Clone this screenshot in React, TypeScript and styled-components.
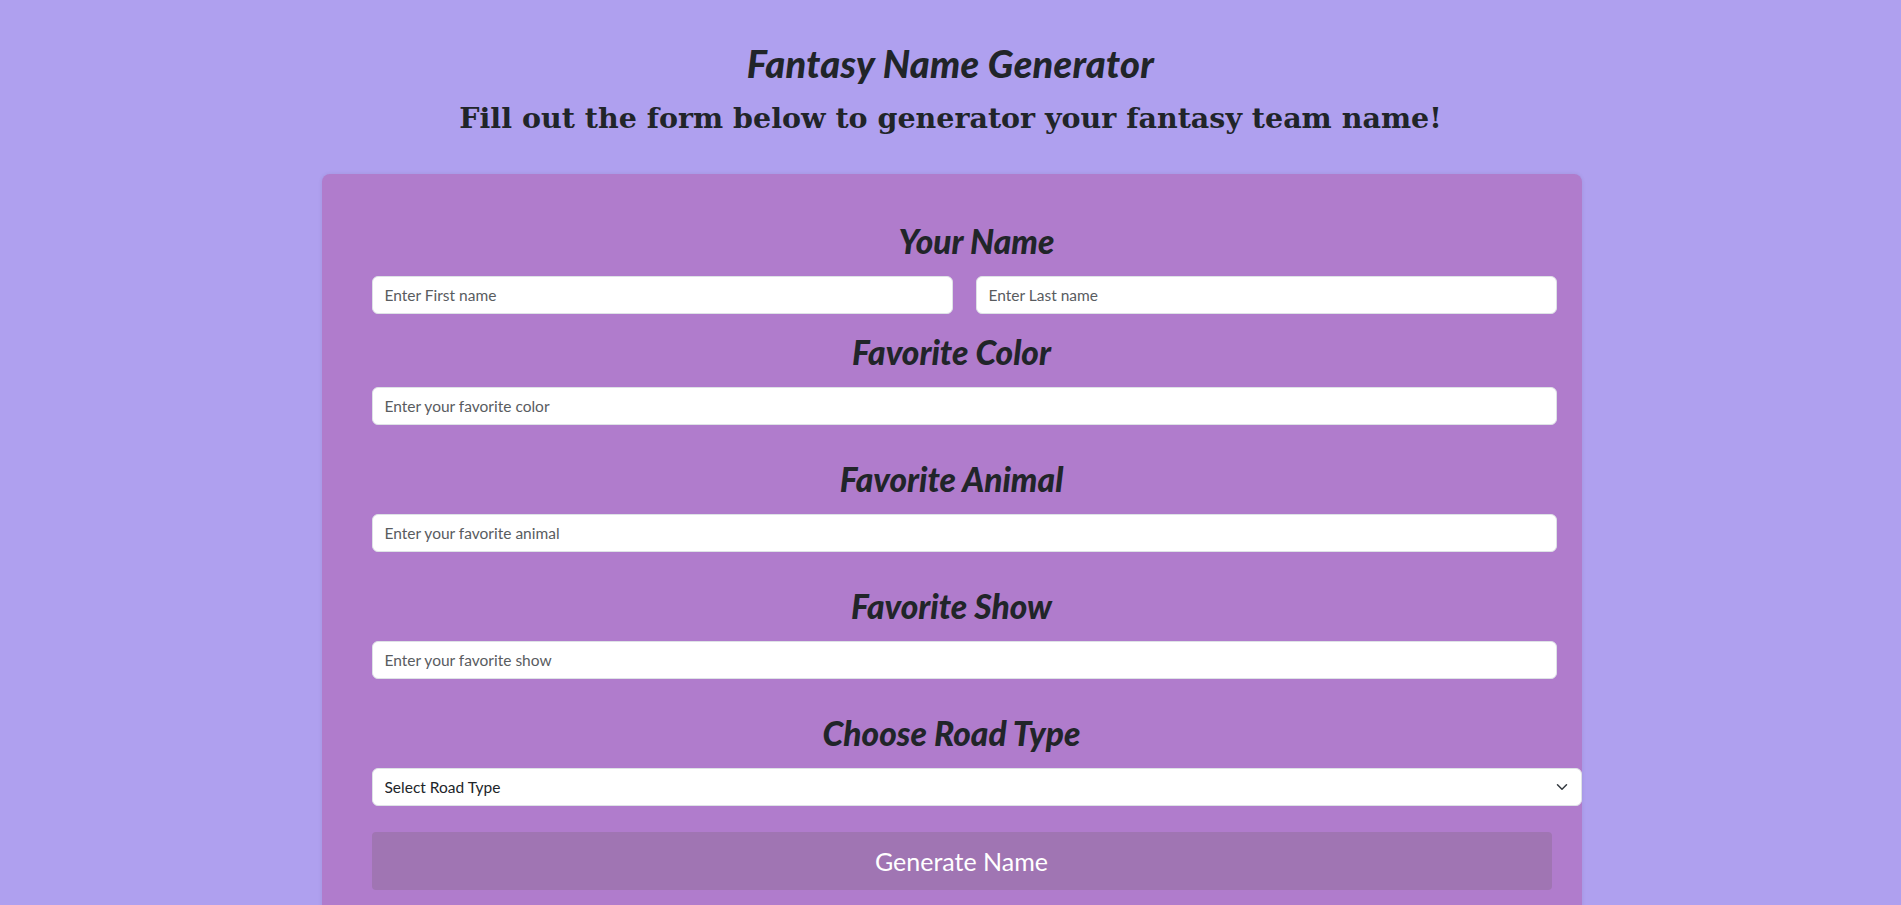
import React from "react";
import styled, { createGlobalStyle } from "styled-components";

const GlobalStyle = createGlobalStyle`
  html, body {
    margin: 0;
    padding: 0;
    background: #afa0ef;
    font-family: Lato, "Open Sans", sans-serif;
    color: #212529;
  }
  * { box-sizing: border-box; }
`;

const Page = styled.div`
  padding-top: 42px;
  min-height: 905px;
`;

const Title = styled.h1`
  margin: 0;
  text-align: center;
  font-family: Lato, sans-serif;
  font-style: italic;
  font-weight: 900;
  font-size: 38px;
  letter-spacing: 0.3px;
  line-height: 42px;
`;

const Subtitle = styled.h2`
  margin: 14px 0 0;
  text-align: center;
  font-family: "DejaVu Serif", serif;
  font-weight: 700;
  font-size: 28.5px;
  line-height: 40px;
`;

const Card = styled.form`
  width: 1260px;
  margin: 36px 0 0 calc(50% - 629px);
  padding: 49px 0 40px 50px;
  background: #b07ccc;
  border-radius: 8px;
  box-shadow: 0 0 4px rgba(0, 0, 0, 0.08);
`;

const Heading = styled.h3<{ $wide?: boolean }>`
  margin: 0 0 17px ${(p) => (p.$wide ? "-50px" : "0")};
  text-align: center;
  font-family: Lato, sans-serif;
  font-style: italic;
  font-weight: 900;
  font-size: 33.5px;
  line-height: 36px;
`;

const NameRow = styled.div`
  display: grid;
  grid-template-columns: 1fr 1fr;
  column-gap: 23px;
  width: calc(100% - 25px);
  margin-bottom: 20px;
`;

const Input = styled.input<{ $last?: boolean }>`
  display: block;
  width: ${(p) => (p.$last ? "100%" : "calc(100% - 25px)")};
  height: 38px;
  margin: 0 0 ${(p) => (p.$last ? "0" : "36px")};
  padding: 6px 12px;
  border: 1px solid #dee2e6;
  border-radius: 6px;
  background: #fff;
  font-family: Lato, sans-serif;
  font-size: 15.5px;
  color: #212529;
  outline: none;
  &::placeholder {
    color: #595c5f;
  }
`;

const SelectWrap = styled.div`
  position: relative;
  width: 100%;
  margin-bottom: 26px;
`;

const Select = styled.select`
  display: block;
  width: 100%;
  height: 38px;
  padding: 6px 36px 6px 12px;
  border: 1px solid #dee2e6;
  border-radius: 6px;
  background: #fff;
  font-family: Lato, sans-serif;
  font-size: 15.5px;
  color: #212529;
  appearance: none;
  outline: none;
`;

const Chevron = styled.svg`
  position: absolute;
  right: 12px;
  top: 13px;
  pointer-events: none;
`;

const Button = styled.button`
  display: block;
  width: calc(100% - 30px);
  height: 58px;
  border: none;
  border-radius: 4px;
  background: #a075b3;
  color: #fff;
  font-family: Lato, sans-serif;
  font-size: 25px;
  cursor: pointer;
`;

export default function App() {
  return (
    <Page>
      <GlobalStyle />
      <Title>Fantasy Name Generator</Title>
      <Subtitle>Fill out the form below to generator your fantasy team name!</Subtitle>
      <Card onSubmit={(e) => e.preventDefault()}>
        <Heading>Your Name</Heading>
        <NameRow>
          <Input $last placeholder="Enter First name" />
          <Input $last placeholder="Enter Last name" />
        </NameRow>

        <Heading $wide>Favorite Color</Heading>
        <Input placeholder="Enter your favorite color" />

        <Heading $wide>Favorite Animal</Heading>
        <Input placeholder="Enter your favorite animal" />

        <Heading $wide>Favorite Show</Heading>
        <Input placeholder="Enter your favorite show" />

        <Heading $wide>Choose Road Type</Heading>
        <SelectWrap>
          <Select defaultValue="">
            <option value="">Select Road Type</option>
            <option value="highway">Highway</option>
            <option value="dirt">Dirt Road</option>
          </Select>
          <Chevron width="16" height="12" viewBox="0 0 16 16" fill="none">
            <path d="m2 5 6 6 6-6" stroke="#343a40" strokeWidth="2" strokeLinecap="round" strokeLinejoin="round" />
          </Chevron>
        </SelectWrap>

        <Button type="submit">Generate Name</Button>
      </Card>
    </Page>
  );
}
